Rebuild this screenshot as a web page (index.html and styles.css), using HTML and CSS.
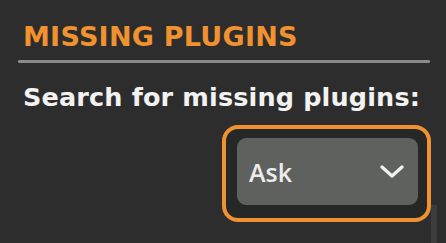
FILE: index.html
```html
<!DOCTYPE html>
<html lang="en">
<head>
  <meta charset="UTF-8" />
  <title>Missing Plugins</title>
  <link rel="stylesheet" href="styles.css">
</head>
<body>
  <div class="panel">
    <h2 class="section-title">MISSING PLUGINS</h2>
    <div class="rule"></div>
    <label class="field-label">Search for missing plugins:</label>
    <div class="field-row">
      <div class="focus-ring">
        <div class="select">
          <span>Ask</span>
          <svg class="chevron" width="24" height="14" viewBox="0 0 24 14">
            <polyline points="2,2 12,11 22,2" fill="none" stroke="#f2f2f2" stroke-width="3.2" stroke-linecap="round" stroke-linejoin="round"/>
          </svg>
        </div>
      </div>
    </div>
    <div class="scrollbar"></div>
  </div>
</body>
</html>
```

FILE: styles.css
```css
html, body {
  margin: 0;
  height: 100%;
  overflow: hidden;
}
body {
  background-color: #2d2d2d;
  font-family: 'DejaVu Sans', sans-serif;
}
.panel {
  position: relative;
  width: 412px;
  padding: 0 0 0 18px;
  height: 243px;
}
.section-title {
  margin: 0;
  padding: 21px 0 0 5px;
  font-size: 27px;
  line-height: 32px;
  font-weight: bold;
  letter-spacing: 0.25px;
  color: #f0922f;
}
.rule {
  height: 3px;
  background: #8a8a8a;
  margin-top: 7px;
  border-radius: 1px;
}
.field-label {
  display: block;
  padding: 18px 0 0 5px;
  font-size: 25.5px;
  line-height: 32px;
  font-weight: bold;
  letter-spacing: 0.15px;
  color: #f2f2f2;
  white-space: nowrap;
}
.field-row {
  display: flex;
  justify-content: flex-end;
  margin-top: 12px;
  margin-right: -1px;
}
.focus-ring {
  border: 4px solid #f0922f;
  border-radius: 16px;
  background: #262827;
  padding: 9px 9px 13px 11px;
}
.select {
  height: 67px;
  padding: 0 14px 0 12px;
  width: 155px;
  background: #5f615e;
  border-radius: 9px;
  display: flex;
  align-items: center;
  justify-content: space-between;
  font-family: 'Open Sans', sans-serif;
  font-size: 25px;
  font-weight: 600;
  color: #ececec;
}
.chevron {
  display: block;
}
.scrollbar {
  position: absolute;
  left: 431px;
  top: 205px;
  width: 6px;
  height: 40px;
  background: #3b3c3b;
}
```
